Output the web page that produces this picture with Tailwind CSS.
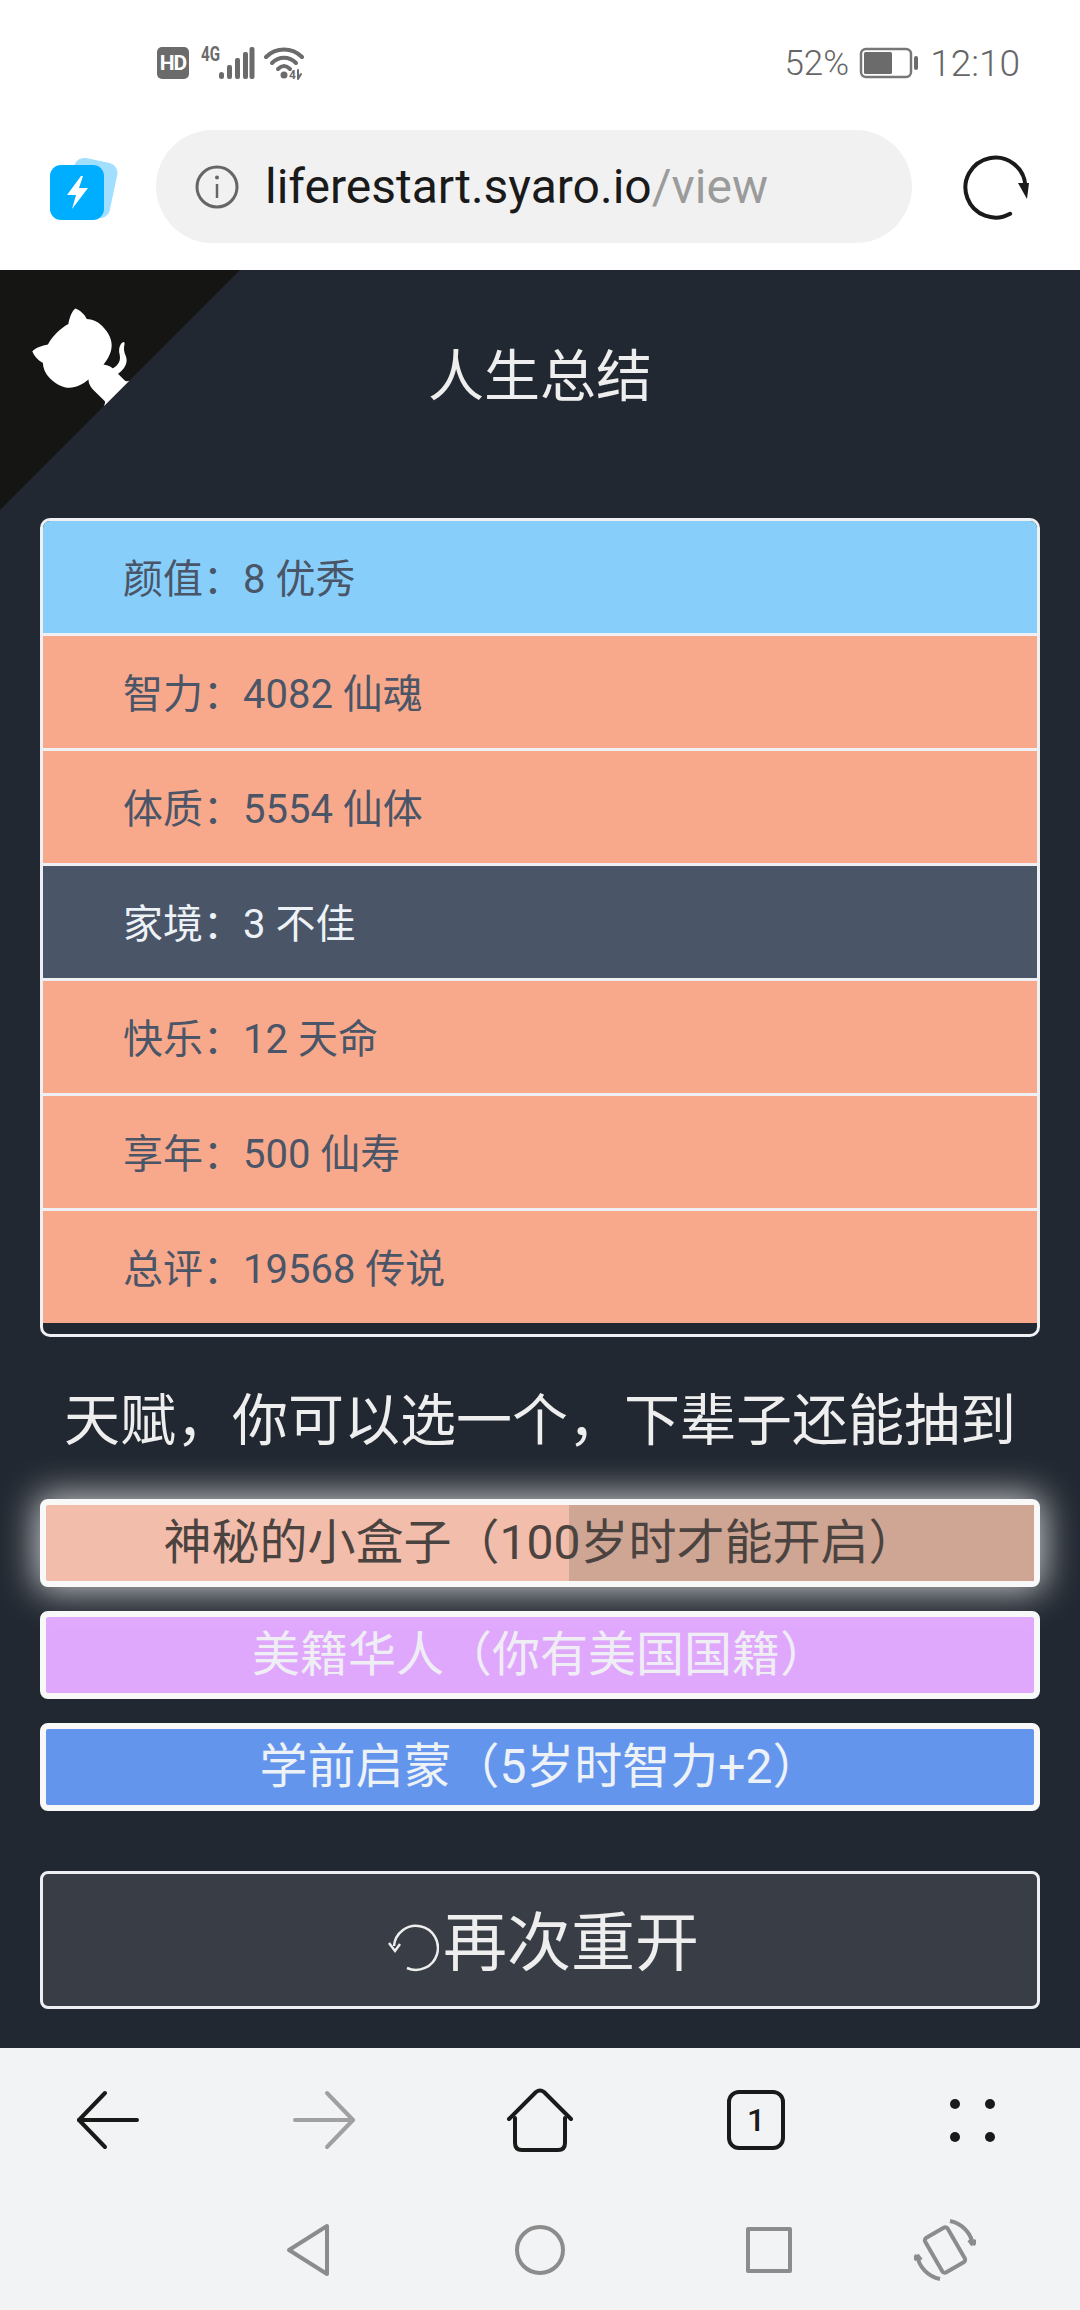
<!DOCTYPE html>
<html lang="zh-CN">
<head>
<meta charset="utf-8">
<script src="https://cdn.jsdelivr.net/npm/@tailwindcss/browser@4"></script>
<title>人生总结</title>
</head>
<body class="font-[Roboto,'Noto_Sans_CJK_SC',sans-serif] bg-white">
<div class="w-[1080px] h-[2310px] flex flex-col overflow-hidden">

  <!-- browser chrome -->
  <header class="bg-white h-[270px] flex flex-col">
    <div class="h-[130px] pl-[157px] pr-[60px] pb-[4px] flex items-center text-[#666666]">
      <div class="w-[32px] h-[32px] rounded-[5px] bg-[#6b6b6b] text-white text-[21px] leading-none font-bold tracking-[-1px] flex items-center justify-center">HD</div>
      <svg class="ml-[12px]" width="54" height="44" viewBox="0 -5 54 44">
        <text x="0" y="15" font-size="20" font-weight="700" fill="#6b6b6b" textLength="19" lengthAdjust="spacingAndGlyphs">4G</text>
        <g fill="#6b6b6b">
          <rect x="18" y="26" width="5" height="7" rx="2.5"/>
          <rect x="26" y="19" width="5" height="14" rx="2"/>
          <rect x="34" y="12" width="5" height="21" rx="2"/>
          <rect x="42" y="6" width="5" height="27" rx="2"/>
          <rect x="48.500" y="1" width="5" height="32" rx="2"/>
        </g>
      </svg>
      <svg class="ml-[9px]" width="40" height="44" viewBox="0 -5 40 44" fill="none" stroke="#6b6b6b" stroke-width="4" stroke-linecap="round">
        <path d="M2 11 C12 1 28 1 38 11"/>
        <path d="M8 17 C15 10 25 10 32 17"/>
        <path d="M14 23 C18 19 22 19 26 23"/>
        <circle cx="20" cy="29" r="3.500" fill="#6b6b6b" stroke="none"/>
        <text x="25" y="33" font-size="12" font-weight="700" fill="#6b6b6b" stroke="none">4</text>
        <path d="M34 24 V33 M37 28 L34 33" stroke-width="2"/>
      </svg>
      <span class="ml-auto text-[35px] leading-none font-light">52%</span>
      <svg class="ml-[10px]" width="60" height="32" viewBox="0 0 60 32" fill="none">
        <rect x="2" y="2" width="50" height="28" rx="5" stroke="#777" stroke-width="2.500"/>
        <rect x="5" y="5" width="28" height="22" rx="1.500" fill="#6b6b6b"/>
        <rect x="55" y="9" width="4" height="14" rx="2" fill="#6b6b6b"/>
      </svg>
      <span class="ml-[11px] text-[37px] leading-none font-light">12:10</span>
    </div>
    <div class="flex items-center pl-[50px]">
      <svg width="68" height="66" viewBox="0 0 68 66">
        <rect x="20" y="6" width="44" height="56" rx="10" fill="#a2dfff" transform="rotate(12 42 34)"/>
        <rect x="0" y="11" width="54" height="55" rx="11" fill="#00aeff"/>
        <path d="M31 22 L17 41 H26 L22 55 L38 34 H29 L33 22 Z" fill="#fff"/>
      </svg>
      <div class="ml-[38px] w-[756px] h-[113px] rounded-full bg-[#f1f1f1] flex items-center pl-[39px]">
        <svg width="44" height="44" viewBox="0 0 44 44" fill="none" stroke="#666" stroke-width="3">
          <circle cx="22" cy="22" r="20"/>
          <path d="M22 19 V33" stroke-width="2.500"/>
          <circle cx="22" cy="12.500" r="2" fill="#666" stroke="none"/>
        </svg>
        <span class="ml-[26px] text-[48px] leading-none text-[#1a1a1a]">liferestart.syaro.io<span class="text-[#9b9b9b]">/view</span></span>
      </div>
      <svg class="ml-[50px]" width="68" height="68" viewBox="0 0 68 68" fill="none">
        <path d="M56 55 A30 30 0 1 1 62 24" stroke="#1a1a1a" stroke-width="4" transform="rotate(18 34 33)" stroke-linecap="round"/>
        <path d="M56 30 L67 30 L65 46 Z" fill="#1a1a1a"/>
      </svg>
    </div>
  </header>

  <!-- page -->
  <main class="relative bg-[#222831] h-[1778px] px-[40px] flex flex-col">
    <svg class="absolute top-0 left-0" width="240" height="240" viewBox="0 0 250 250" fill="#fff">
      <g transform="translate(250 0) scale(-1 1)">
        <path d="M0,0 L115,115 L130,115 L142,142 L250,250 L250,0 Z" fill="#151513"/>
        <path d="M128.3,109.0 C113.8,99.7 119.0,89.6 119.0,89.6 C122.0,82.7 120.5,78.6 120.5,78.6 C119.2,72.0 123.4,76.3 123.4,76.3 C127.3,80.9 125.5,87.3 125.5,87.3 C122.9,97.6 130.6,101.9 134.4,103.2"/>
        <path d="M115.0,115.0 C114.9,115.1 118.7,116.5 119.8,115.4 L133.7,101.6 C136.9,99.2 139.9,98.4 142.2,98.6 C133.8,88.0 127.5,74.4 143.8,58.0 C148.5,53.4 154.0,51.2 159.7,51.0 C160.3,49.4 163.2,43.6 171.4,40.1 C171.4,40.1 176.1,42.5 178.8,56.2 C183.1,58.6 187.2,61.8 190.9,65.4 C194.5,69.0 197.7,73.2 200.1,77.6 C213.8,80.2 216.3,84.9 216.3,84.9 C212.7,93.1 206.9,96.0 205.4,96.6 C205.1,102.4 203.0,107.8 198.3,112.5 C181.9,128.9 168.3,122.5 157.7,114.1 C157.9,116.9 156.7,120.9 152.7,124.9 L141.0,136.5 C139.8,137.7 141.6,141.9 141.8,141.8 Z"/>
      </g>
    </svg>

    <h1 class="h-[248px] pb-[35px] flex items-center justify-center text-[56px] font-normal text-[#eeeeee]">人生总结</h1>

    <section class="h-[819px] border-[3px] border-[#eef0f3] rounded-[10px] overflow-hidden text-[40px] text-[#4a5568] flex flex-col">
      <div class="h-[115px] shrink-0 border-b-[3px] border-[#eef0f3] bg-[#87cefa] pl-[80px] pt-[6px] flex items-center">颜值：8 优秀</div>
      <div class="h-[115px] shrink-0 border-b-[3px] border-[#eef0f3] bg-[#f8a98b] pl-[80px] pt-[6px] flex items-center">智力：4082 仙魂</div>
      <div class="h-[115px] shrink-0 border-b-[3px] border-[#eef0f3] bg-[#f8a98b] pl-[80px] pt-[6px] flex items-center">体质：5554 仙体</div>
      <div class="h-[115px] shrink-0 border-b-[3px] border-[#eef0f3] bg-[#4a5568] text-[#edf2f7] pl-[80px] pt-[6px] flex items-center">家境：3 不佳</div>
      <div class="h-[115px] shrink-0 border-b-[3px] border-[#eef0f3] bg-[#f8a98b] pl-[80px] pt-[6px] flex items-center">快乐：12 天命</div>
      <div class="h-[115px] shrink-0 border-b-[3px] border-[#eef0f3] bg-[#f8a98b] pl-[80px] pt-[6px] flex items-center">享年：500 仙寿</div>
      <div class="h-[112px] shrink-0 bg-[#f8a98b] pl-[80px] pt-[6px] flex items-center">总评：19568 传说</div>
    </section>

    <h2 class="h-[162px] pt-[6px] flex items-center justify-center text-[56px] font-normal text-[#eeeeee] whitespace-nowrap">天赋，你可以选一个，下辈子还能抽到</h2>

    <ul class="flex flex-col gap-[24px] text-[48px]">
      <li class="relative h-[88px] border-[6px] border-[#f8f8f8] rounded-[8px] bg-[#f3bdab] text-[#4a4340] flex items-center justify-center shadow-[0_0_36px_4px_rgba(255,255,255,0.75)]">
        <span class="absolute top-0 bottom-0 right-0 left-[523px] bg-[#cfa594]"></span>
        <span class="relative">神秘的小盒子（100岁时才能开启）</span>
      </li>
      <li class="h-[88px] border-[6px] border-[#f8f8f8] rounded-[8px] bg-[#e0a8fd] text-[#f0eef5] flex items-center justify-center">美籍华人（你有美国国籍）</li>
      <li class="h-[88px] border-[6px] border-[#f8f8f8] rounded-[8px] bg-[#6495ed] text-[#edf2f7] flex items-center justify-center">学前启蒙（5岁时智力+2）</li>
    </ul>

    <button class="mt-[60px] h-[138px] pt-[8px] pl-[6px] border-[3px] border-[#eef0f3] rounded-[8px] bg-[#393e46] text-[#eeeeee] text-[64px] flex items-center justify-center">
      <svg width="52" height="52" viewBox="0 0 52 52" fill="none" stroke="#eeeeee" stroke-width="2.500" class="mt-[6px]">
        <path d="M7 25 A22 22 0 1 1 20 47"/>
        <path d="M2 22 L8 30 L13 23" stroke-width="2.500"/>
      </svg>
      <span class="ml-[4px]">再次重开</span>
    </button>
  </main>

  <!-- browser toolbar -->
  <footer class="bg-[#f2f3f5] h-[262px] flex flex-col">
    <div class="h-[144px] grid grid-cols-5 items-center">
      <div class="flex justify-center">
        <svg width="64" height="60" viewBox="0 0 64 60" fill="none" stroke="#1a1a1a" stroke-width="4" stroke-linecap="round" stroke-linejoin="round">
          <path d="M3 30 H61"/>
          <path d="M29 3 L3 30 L29 57"/>
        </svg>
      </div>
      <div class="flex justify-center">
        <svg width="64" height="60" viewBox="0 0 64 60" fill="none" stroke="#a0a0a0" stroke-width="4" stroke-linecap="round" stroke-linejoin="round">
          <path d="M3 30 H61"/>
          <path d="M35 3 L61 30 L35 57"/>
        </svg>
      </div>
      <div class="flex justify-center">
        <svg width="68" height="66" viewBox="0 0 68 66" fill="none" stroke="#1a1a1a" stroke-width="4" stroke-linecap="round" stroke-linejoin="round">
          <path d="M3 32 L30 5 Q34 2 38 5 L65 32"/>
          <path d="M9 31 V56 Q9 63 16 63 H52 Q59 63 59 56 V31"/>
        </svg>
      </div>
      <div class="flex justify-center">
        <div class="w-[58px] h-[60px] border-[4px] border-[#1a1a1a] rounded-[12px] flex items-center justify-center text-[32px] leading-none font-medium text-[#1a1a1a]">1</div>
      </div>
      <div class="flex justify-center">
        <div class="grid grid-cols-2 gap-x-[25px] gap-y-[23px]">
          <span class="w-[10px] h-[10px] rounded-full bg-[#1a1a1a]"></span>
          <span class="w-[10px] h-[10px] rounded-full bg-[#1a1a1a]"></span>
          <span class="w-[10px] h-[10px] rounded-full bg-[#1a1a1a]"></span>
          <span class="w-[10px] h-[10px] rounded-full bg-[#1a1a1a]"></span>
        </div>
      </div>
    </div>
    <div class="h-[118px] pl-[286px] pb-[3px] flex items-center">
      <svg width="44" height="54" viewBox="0 0 44 54" fill="none" stroke="#8c8c8c" stroke-width="4" stroke-linejoin="round">
        <path d="M41 3 V51 L3 27 Z"/>
      </svg>
      <svg class="ml-[184px]" width="52" height="52" viewBox="0 0 52 52" fill="none" stroke="#8c8c8c" stroke-width="4">
        <circle cx="26" cy="26" r="23"/>
      </svg>
      <div class="ml-[180px] w-[46px] h-[46px] border-[4px] border-[#8c8c8c] rounded-[2px]"></div>
      <svg class="ml-[122px]" width="62" height="62" viewBox="0 0 62 62" fill="none" stroke="#8c8c8c" stroke-width="4">
        <rect x="18" y="11" width="26" height="40" rx="3" transform="rotate(-30 31 31)"/>
        <path d="M36 2 A29 29 0 0 1 59 26"/>
        <path d="M26 60 A29 29 0 0 1 3 36"/>
        <path d="M59 26 L55 21 M59 26 L62 21"/>
        <path d="M3 36 L0 41 M3 36 L7 41"/>
      </svg>
    </div>
  </footer>
</div>
</body>
</html>
